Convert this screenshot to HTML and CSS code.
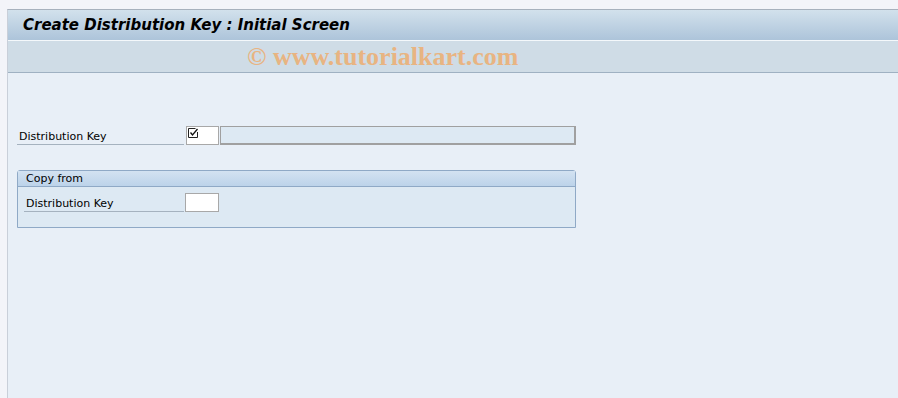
FILE: index.html
```html
<!DOCTYPE html>
<html lang="en">

<head>
    <meta charset="UTF-8">
    <title>Create Distribution Key : Initial Screen</title>
    <link rel="stylesheet" href="styles.css">
</head>

<body>
    <div class="frame">
        <!-- title bar -->
        <div class="title-bar">
            <h1 class="title">Create Distribution Key : Initial Screen</h1>
        </div>

        <!-- application toolbar -->
        <div class="toolbar">
            <span class="watermark">© www.tutorialkart.com</span>
        </div>

        <!-- screen area -->
        <div class="screen">
            <div class="field-row">
                <label class="field-label">Distribution Key</label>
                <div class="input key-input">
                    <!-- required-entry marker -->
                    <svg class="check" width="11" height="10" viewBox="0 0 11 10">
                        <path d="M7.5 0.5 H0.5 V9.5 H9.5 V4" fill="none" stroke="#222" stroke-width="1" />
                        <path d="M2.5 4.5 L4.5 7 L9.5 1" fill="none" stroke="#111" stroke-width="1.3" />
                    </svg>
                </div>
                <div class="input desc-input"></div>
            </div>

            <div class="group">
                <div class="group-head">Copy from</div>
                <div class="group-body">
                    <div class="field-row inner">
                        <label class="field-label">Distribution Key</label>
                        <div class="input key-input"></div>
                    </div>
                </div>
            </div>
        </div>
    </div>
</body>

</html>
```

FILE: styles.css
```css
html,
body {
    margin: 0;
    padding: 0;
    height: 100%;
}

body {
    background: #f3f4f9;
    padding-top: 9px;
    padding-left: 7px;
    box-sizing: border-box;
    font-family: Tahoma, "DejaVu Sans", sans-serif;
}

.frame {
    height: 100%;
    border-left: 1px solid #c9cfd9;
    border-top: 1px solid #a7b1bd;
    background: #e8eff7;
}

.title-bar {
    height: 30px;
    background: linear-gradient(to bottom, #d2e1ec, #adc4da);
    border-bottom: 1px solid #f4f8fb;
    display: flex;
    align-items: center;
}

.title {
    margin: 0 0 0 15px;
    font-family: "DejaVu Sans", sans-serif;
    font-size: 15px;
    font-weight: bold;
    font-style: italic;
    color: #000;
}

.toolbar {
    height: 31px;
    background: #cfdce6;
    border-bottom: 1px solid #9fb1c2;
    padding-left: 239px;
    display: flex;
    align-items: center;
}

.watermark {
    font-family: "Liberation Serif", serif;
    font-weight: bold;
    font-size: 26px;
    color: #e8b482;
}

.screen {
    padding: 52px 0 0 9px;
}

.field-row {
    display: flex;
    align-items: flex-end;
    height: 20px;
}

.field-label {
    width: 167px;
    height: 19px;
    box-sizing: border-box;
    padding: 2px 0 0 2px;
    font-size: 11px;
    color: #000;
    line-height: 17px;
    border-bottom: 1px solid #a5b2bf;
}

.input {
    height: 19px;
    box-sizing: border-box;
    border: 1px solid #a8a8a8;
    background: #fff;
}

.key-input {
    width: 33px;
    margin-left: 2px;
    position: relative;
}

.check {
    position: absolute;
    left: 1px;
    top: 1px;
}

.desc-input {
    width: 356px;
    margin-left: 1px;
    background: #dde9f3;
    border-color: #a0a0a0;
    border-right-width: 2px;
    border-bottom-width: 2px;
}

.group {
    width: 557px;
    margin-top: 25px;
    border: 1px solid #8fa9c6;
    border-radius: 3px 3px 0 0;
    background: #dde9f3;
}

.group-head {
    height: 15px;
    padding-left: 8px;
    font-size: 11px;
    line-height: 15px;
    background: linear-gradient(to bottom, #d3e2f1, #bcd3ea);
    border-bottom: 1px solid #8fa9c6;
}

.group-body {
    height: 40px;
    padding: 5px 0 0 6px;
    box-sizing: border-box;
}

.inner .field-label {
    width: 160px;
}

.inner .key-input {
    width: 34px;
    margin-left: 1px;
}
```
